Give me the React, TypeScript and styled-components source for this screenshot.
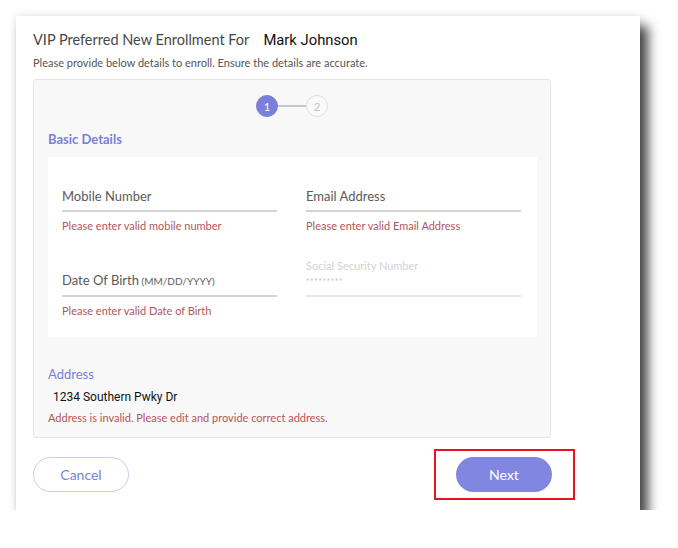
import React from 'react';
import styled, { createGlobalStyle } from 'styled-components';

const GlobalStyle = createGlobalStyle`
  html, body {
    margin: 0;
    padding: 0;
    background: #ffffff;
  }
  body {
    font-family: Lato, "Noto Sans", sans-serif;
  }
`;

type FieldProps = {
  label: string;
  hint?: string;
  error?: string;
};

const Field: React.FC<FieldProps> = ({ label, hint, error }) => (
  <FieldWrap>
    <InputBox>
      <Label>
        {label}
        {hint && <Hint> {hint}</Hint>}
      </Label>
    </InputBox>
    {error && <ErrorText>{error}</ErrorText>}
  </FieldWrap>
);

const SecretField: React.FC<{ label: string }> = ({ label }) => (
  <FieldWrap>
    <InputBox $muted>
      <FloatLabel>{label}</FloatLabel>
      <Masked>*********</Masked>
    </InputBox>
  </FieldWrap>
);

const App: React.FC = () => {
  return (
    <>
      <GlobalStyle />
      <Page>
        <Card>
          <Header>
            <Title>VIP Preferred New Enrollment For</Title>
            <Name>Mark Johnson</Name>
          </Header>
          <Subtitle>
            Please provide below details to enroll. Ensure the details are accurate.
          </Subtitle>

          <Panel>
            <Stepper>
              <Step $active>1</Step>
              <StepLine />
              <Step>2</Step>
            </Stepper>

            <SectionTitle>Basic Details</SectionTitle>
            <FormBox>
              <Field label="Mobile Number" error="Please enter valid mobile number" />
              <Field label="Email Address" error="Please enter valid Email Address" />
              <Field
                label="Date Of Birth"
                hint="(MM/DD/YYYY)"
                error="Please enter valid Date of Birth"
              />
              <SecretField label="Social Security Number" />
            </FormBox>

            <AddressTitle>Address</AddressTitle>
            <AddressLine>1234 Southern Pwky Dr</AddressLine>
            <ErrorText>Address is invalid. Please edit and provide correct address.</ErrorText>
          </Panel>

          <Actions>
            <CancelButton>Cancel</CancelButton>
            <Highlight>
              <NextButton>Next</NextButton>
            </Highlight>
          </Actions>
        </Card>
      </Page>
    </>
  );
};

export default App;

const Page = styled.div`
  padding: 16px 0 0 16px;
`;

const Card = styled.div`
  box-sizing: border-box;
  width: 624px;
  height: 494px;
  padding: 15px 89px 0 17px;
  background: #ffffff;
  box-shadow: 8px 10px 11px rgba(0, 0, 0, 0.72), 0 0 8px rgba(0, 0, 0, 0.12);
`;

const Header = styled.div`
  display: flex;
  align-items: baseline;
  gap: 14px;
  height: 22px;
`;

const Title = styled.div`
  font-size: 14.5px;
  color: #474747;
`;

const Name = styled.div`
  font-family: Roboto, "Liberation Sans", sans-serif;
  font-size: 14.8px;
  color: #111111;
`;

const Subtitle = styled.div`
  margin-top: 2px;
  font-size: 11px;
  line-height: 16px;
  color: #555555;
`;

const Panel = styled.div`
  box-sizing: border-box;
  margin-top: 8px;
  height: 359px;
  padding: 15px 14px 0 14px;
  background: #f8f8f8;
  border: 1px solid #e6e6e6;
  border-radius: 3px;
`;

const Stepper = styled.div`
  display: flex;
  align-items: center;
  justify-content: center;
`;

const Step = styled.div<{ $active?: boolean }>`
  box-sizing: border-box;
  width: 22px;
  height: 22px;
  border-radius: 50%;
  display: flex;
  align-items: center;
  justify-content: center;
  font-size: 11.5px;
  color: ${(p) => (p.$active ? '#ffffff' : '#c4c4c4')};
  background: ${(p) => (p.$active ? '#7a7fdb' : '#fafafa')};
  border: 1.5px solid ${(p) => (p.$active ? '#7a7fdb' : '#dedede')};
`;

const StepLine = styled.div`
  width: 28px;
  height: 1.5px;
  background: #c8c8c8;
`;

const SectionTitle = styled.div`
  margin-top: 14px;
  font-size: 13px;
  line-height: 16px;
  font-weight: 700;
  color: #7a7fdb;
`;

const FormBox = styled.div`
  display: grid;
  grid-template-columns: 215px 215px;
  column-gap: 29px;
  row-gap: 25px;
  margin-top: 10px;
  width: 489px;
  box-sizing: border-box;
  padding: 17px 14px 18px 14px;
  background: #ffffff;
`;

const FieldWrap = styled.div`
  display: flex;
  flex-direction: column;
`;

const InputBox = styled.div<{ $muted?: boolean }>`
  box-sizing: border-box;
  height: 38px;
  display: flex;
  flex-direction: column;
  justify-content: flex-end;
  padding-bottom: ${(p) => (p.$muted ? '7px' : '5px')};
  border-bottom: 2px solid ${(p) => (p.$muted ? '#e8e8e8' : '#d4d4d4')};
`;

const Label = styled.div`
  font-size: 13px;
  line-height: 18px;
  color: #5a5a5a;
`;

const Hint = styled.span`
  font-size: 10px;
  color: #5e5e5e;
`;

const FloatLabel = styled.div`
  font-size: 11px;
  line-height: 14px;
  color: #d2d2d2;
`;

const Masked = styled.div`
  margin-top: 3px;
  font-size: 8.5px;
  line-height: 12px;
  letter-spacing: 0.5px;
  color: #c0c0c0;
`;

const ErrorText = styled.div`
  margin-top: 6px;
  font-size: 11px;
  line-height: 16px;
  color: #b3565b;
`;

const AddressTitle = styled.div`
  margin-top: 29px;
  font-size: 13px;
  line-height: 16px;
  color: #7a7fdb;
`;

const AddressLine = styled.div`
  margin-top: 8px;
  padding-left: 5px;
  font-family: Roboto, "Liberation Sans", sans-serif;
  font-size: 12px;
  line-height: 14px;
  color: #111111;
`;

const Actions = styled.div`
  display: flex;
  align-items: center;
  justify-content: space-between;
  margin-top: 11px;
`;

const PillButton = styled.button`
  box-sizing: border-box;
  width: 96px;
  height: 35px;
  border-radius: 18px;
  font-family: Lato, "Noto Sans", sans-serif;
  font-size: 14px;
  cursor: pointer;
`;

const CancelButton = styled(PillButton)`
  background: #ffffff;
  border: 1.5px solid #c9cbef;
  color: #7a7fdb;
`;

const NextButton = styled(PillButton)`
  background: #8187e0;
  border: none;
  color: #ffffff;
`;

const Highlight = styled.div`
  box-sizing: border-box;
  width: 141px;
  height: 51px;
  margin-right: -24px;
  padding: 6px 0 0 20px;
  border: 2px solid #e8141b;
`;
